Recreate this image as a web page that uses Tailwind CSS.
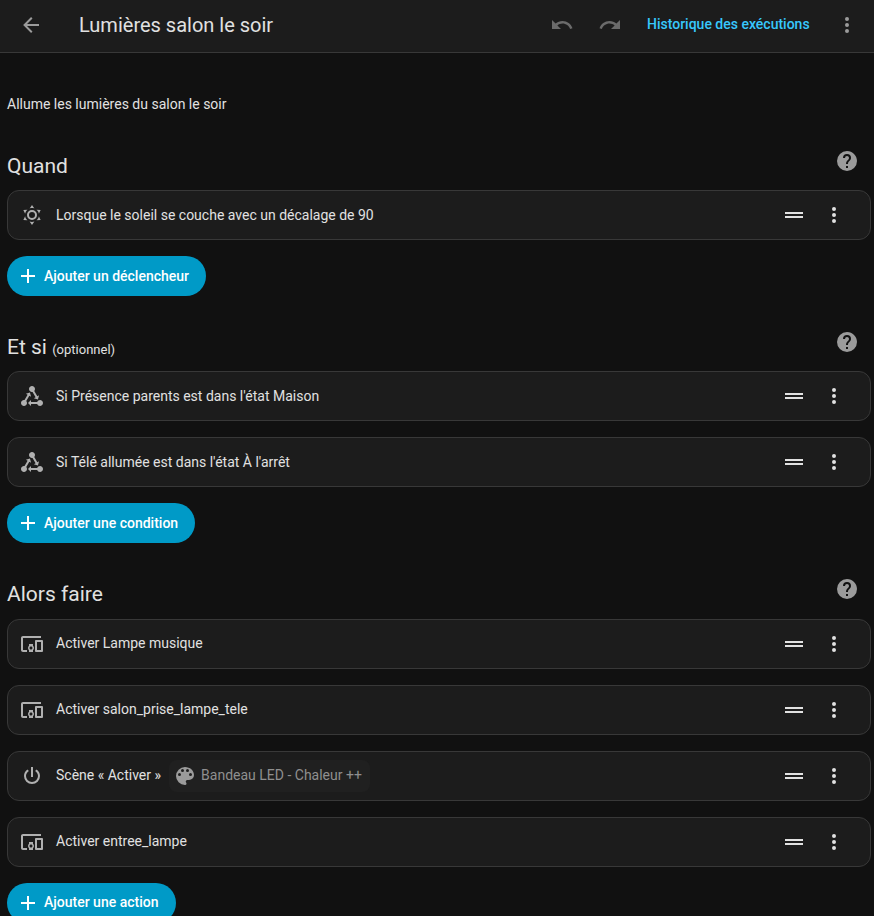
<!DOCTYPE html>
<html lang="fr">
<head>
<meta charset="utf-8">
<title>Lumières salon le soir</title>
<script src="https://cdn.jsdelivr.net/npm/@tailwindcss/browser@4"></script>
</head>
<body class="h-[916px] w-[874px] overflow-hidden bg-[#111111] font-['Roboto','Noto_Sans',sans-serif] text-sm text-[#e1e1e1] antialiased">
<svg class="hidden">
  <symbol id="back" viewBox="0 0 24 24"><path d="M20,11V13H8L13.5,18.5L12.08,19.92L4.16,12L12.08,4.08L13.5,5.5L8,11H20Z"/></symbol>
  <symbol id="undo" viewBox="0 0 24 24"><path d="M12.5,8C9.85,8 7.45,9 5.6,10.6L2,7V16H11L7.38,12.38C8.77,11.22 10.54,10.5 12.5,10.5C16.04,10.5 19.05,12.81 20.1,16L22.47,15.22C21.08,11.03 17.15,8 12.5,8Z"/></symbol>
  <symbol id="redo" viewBox="0 0 24 24"><path d="M18.4,10.6C16.55,9 14.15,8 11.5,8C6.85,8 2.92,11.03 1.54,15.22L3.9,16C4.95,12.81 7.95,10.5 11.5,10.5C13.45,10.5 15.23,11.22 16.62,12.38L13,16H22V7L18.4,10.6Z"/></symbol>
  <symbol id="dots" viewBox="0 0 24 24"><path d="M12,16A2,2 0 0,1 14,18A2,2 0 0,1 12,20A2,2 0 0,1 10,18A2,2 0 0,1 12,16M12,10A2,2 0 0,1 14,12A2,2 0 0,1 12,14A2,2 0 0,1 10,12A2,2 0 0,1 12,10M12,4A2,2 0 0,1 14,6A2,2 0 0,1 12,8A2,2 0 0,1 10,6A2,2 0 0,1 12,4Z"/></symbol>
  <symbol id="help" viewBox="0 0 24 24"><path d="M15.07,11.25L14.17,12.17C13.45,12.89 13,13.5 13,15H11V14.5C11,13.39 11.45,12.39 12.17,11.67L13.41,10.41C13.78,10.05 14,9.55 14,9C14,7.89 13.1,7 12,7A2,2 0 0,0 10,9H8A4,4 0 0,1 12,5A4,4 0 0,1 16,9C16,9.88 15.64,10.67 15.07,11.25M13,19H11V17H13M12,2A10,10 0 0,0 2,12A10,10 0 0,0 12,22A10,10 0 0,0 22,12C22,6.47 17.5,2 12,2Z"/></symbol>
  <symbol id="plus" viewBox="0 0 24 24"><path d="M19,13H13V19H11V13H5V11H11V5H13V11H19V13Z"/></symbol>
  <symbol id="drag" viewBox="0 0 24 24"><path d="M21 11H3V9H21V11M21 13H3V15H21V13Z"/></symbol>
  <symbol id="power" viewBox="0 0 24 24"><path d="M16.56,5.44L15.11,6.89C16.84,7.94 18,9.83 18,12A6,6 0 0,1 12,18A6,6 0 0,1 6,12C6,9.83 7.16,7.94 8.88,6.88L7.44,5.44C5.36,6.88 4,9.28 4,12A8,8 0 0,0 12,20A8,8 0 0,0 20,12C20,9.28 18.64,6.88 16.56,5.44M13,3H11V13H13"/></symbol>
  <symbol id="palette" viewBox="0 0 24 24"><path d="M17.5,12A1.5,1.5 0 0,1 16,10.5A1.5,1.5 0 0,1 17.5,9A1.5,1.5 0 0,1 19,10.5A1.5,1.5 0 0,1 17.5,12M14.5,8A1.5,1.5 0 0,1 13,6.5A1.5,1.5 0 0,1 14.5,5A1.5,1.5 0 0,1 16,6.5A1.5,1.5 0 0,1 14.5,8M9.5,8A1.5,1.5 0 0,1 8,6.5A1.5,1.5 0 0,1 9.5,5A1.5,1.5 0 0,1 11,6.5A1.5,1.5 0 0,1 9.5,8M6.5,12A1.5,1.5 0 0,1 5,10.5A1.5,1.5 0 0,1 6.5,9A1.5,1.5 0 0,1 8,10.5A1.5,1.5 0 0,1 6.5,12M12,3A9,9 0 0,0 3,12A9,9 0 0,0 12,21A1.5,1.5 0 0,0 13.5,19.5C13.5,19.11 13.35,18.76 13.11,18.5C12.88,18.23 12.73,17.88 12.73,17.5A1.5,1.5 0 0,1 14.23,16H16A5,5 0 0,0 21,11C21,6.58 16.97,3 12,3Z"/></symbol>
  <symbol id="devices" viewBox="0 0 24 24"><path d="M3 6H21V4H3C1.9 4 1 4.9 1 6V18C1 19.1 1.9 20 3 20H7V18H3V6M13 12H9V13.78C8.39 14.33 8 15.11 8 16C8 16.89 8.39 17.67 9 18.22V20H13V18.22C13.61 17.67 14 16.88 14 16S13.61 14.33 13 13.78V12M11 17.5C10.17 17.5 9.5 16.83 9.5 16S10.17 14.5 11 14.5 12.5 15.17 12.5 16 11.83 17.5 11 17.5M22 8H16C15.5 8 15 8.5 15 9V19C15 19.5 15.5 20 16 20H22C22.5 20 23 19.5 23 19V9C23 8.5 22.5 8 22 8M21 18H17V10H21V18Z"/></symbol>
  <symbol id="sun" viewBox="0 0 24 24"><path d="M12,7A5,5 0 0,1 17,12A5,5 0 0,1 12,17A5,5 0 0,1 7,12A5,5 0 0,1 12,7M12,9A3,3 0 0,0 9,12A3,3 0 0,0 12,15A3,3 0 0,0 15,12A3,3 0 0,0 12,9M12,2L14.39,5.42C13.65,5.15 12.84,5 12,5C11.16,5 10.35,5.15 9.61,5.42L12,2M3.34,7L7.5,6.65C6.9,7.16 6.36,7.78 5.94,8.5C5.5,9.24 5.25,10 5.11,10.79L3.34,7M3.36,17L5.12,13.23C5.26,14 5.53,14.78 5.95,15.5C6.37,16.24 6.91,16.86 7.5,17.37L3.36,17M20.65,7L18.88,10.79C18.74,10 18.47,9.23 18.05,8.5C17.63,7.78 17.1,7.15 16.5,6.64L20.65,7M20.64,17L16.5,17.36C17.09,16.85 17.62,16.22 18.04,15.5C18.46,14.77 18.73,14 18.87,13.21L20.64,17M12,22L9.59,18.56C10.33,18.83 11.14,19 12,19C12.82,19 13.63,18.83 14.37,18.56L12,22Z"/></symbol>
  <symbol id="state" viewBox="0 0 24 24"><path d="M6.27 17.05C6.72 17.58 7 18.25 7 19C7 20.66 5.66 22 4 22S1 20.66 1 19 2.34 16 4 16C4.18 16 4.36 16 4.53 16.05L7.6 10.69L5.86 9.7L9.95 8.58L11.07 12.67L9.33 11.68L6.27 17.05M20 16C18.7 16 17.6 16.84 17.18 18H11V16L8 19L11 22V20H17.18C17.6 21.16 18.7 22 20 22C21.66 22 23 20.66 23 19S21.66 16 20 16M12 8C12.18 8 12.36 8 12.53 7.95L15.6 13.31L13.86 14.3L17.95 15.42L19.07 11.33L17.33 12.32L14.27 6.95C14.72 6.42 15 5.75 15 5C15 3.34 13.66 2 12 2S9 3.34 9 5 10.34 8 12 8Z"/></symbol>
</svg>

<header class="flex h-[53px] items-center border-b border-[#383838] bg-[#1c1c1c] pt-px pr-[15px] pb-[3px] pl-[19px]">
  <svg class="size-6 fill-[#9b9b9b]"><use href="#back"/></svg>
  <h1 class="ml-9 flex-1 text-xl leading-6">Lumières salon le soir</h1>
  <svg class="mr-6 size-6 fill-[#6b6b6b]"><use href="#undo"/></svg>
  <svg class="size-6 fill-[#6b6b6b]"><use href="#redo"/></svg>
  <span class="ml-[25px] w-[163px] pb-0.5 text-sm font-medium whitespace-nowrap text-[#37c8fd]">Historique des exécutions</span>
  <svg class="ml-[25px] size-6 fill-[#9b9b9b]"><use href="#dots"/></svg>
</header>

<main class="pr-[3px] pl-[7px]">
  <p class="pt-[41px] leading-5">Allume les lumières du salon le soir</p>

  <section class="pt-[35px]">
    <div class="flex h-[41px] justify-between pr-3">
      <h2 class="pt-[5px] text-[21px] leading-6">Quand</h2>
      <svg class="size-6 fill-[#9b9b9b]"><use href="#help"/></svg>
    </div>
    <div class="flex flex-col items-start gap-4">
      <div class="flex h-[50px] w-full items-center rounded-xl border border-[#383838] bg-[#1c1c1c] pr-6 pl-3">
        <svg class="size-6 fill-[#b0b0b0]"><use href="#sun"/></svg>
        <span class="ml-3 flex-1">Lorsque le soleil se couche avec un décalage de 90</span>
        <svg class="mr-4 size-6 fill-current"><use href="#drag"/></svg>
        <svg class="size-6 fill-current"><use href="#dots"/></svg>
      </div>
      <button class="flex h-10 items-center gap-1 rounded-full bg-[#009ac7] pr-[17px] pl-[9px] font-medium text-white"><svg class="size-6 fill-current"><use href="#plus"/></svg><span>Ajouter un déclencheur</span></button>
    </div>
  </section>

  <section class="pt-[34px]">
    <div class="flex h-[41px] justify-between pr-3">
      <h2 class="pt-[5px] text-[21px] leading-6">Et si <span class="text-[13px]">(optionnel)</span></h2>
      <svg class="size-6 fill-[#9b9b9b]"><use href="#help"/></svg>
    </div>
    <div class="flex flex-col items-start gap-4">
      <div class="flex h-[50px] w-full items-center rounded-xl border border-[#383838] bg-[#1c1c1c] pr-6 pl-3">
        <svg class="size-6 fill-[#b0b0b0]"><use href="#state"/></svg>
        <span class="ml-3 flex-1">Si Présence parents est dans l'état Maison</span>
        <svg class="mr-4 size-6 fill-current"><use href="#drag"/></svg>
        <svg class="size-6 fill-current"><use href="#dots"/></svg>
      </div>
      <div class="flex h-[50px] w-full items-center rounded-xl border border-[#383838] bg-[#1c1c1c] pr-6 pl-3">
        <svg class="size-6 fill-[#b0b0b0]"><use href="#state"/></svg>
        <span class="ml-3 flex-1">Si Télé allumée est dans l'état À l'arrêt</span>
        <svg class="mr-4 size-6 fill-current"><use href="#drag"/></svg>
        <svg class="size-6 fill-current"><use href="#dots"/></svg>
      </div>
      <button class="flex h-10 items-center gap-1 rounded-full bg-[#009ac7] pr-[17px] pl-[9px] font-medium text-white"><svg class="size-6 fill-current"><use href="#plus"/></svg><span>Ajouter une condition</span></button>
    </div>
  </section>

  <section class="pt-[34px]">
    <div class="flex h-[42px] justify-between pr-3">
      <h2 class="pt-[5px] text-[21px] leading-6">Alors faire</h2>
      <svg class="size-6 fill-[#9b9b9b]"><use href="#help"/></svg>
    </div>
    <div class="flex flex-col items-start gap-4">
      <div class="flex h-[50px] w-full items-center rounded-xl border border-[#383838] bg-[#1c1c1c] pr-6 pl-3">
        <svg class="size-6 fill-[#b0b0b0]"><use href="#devices"/></svg>
        <span class="ml-3 flex-1 pb-0.5">Activer Lampe musique</span>
        <svg class="mr-4 size-6 fill-current"><use href="#drag"/></svg>
        <svg class="size-6 fill-current"><use href="#dots"/></svg>
      </div>
      <div class="flex h-[50px] w-full items-center rounded-xl border border-[#383838] bg-[#1c1c1c] pr-6 pl-3">
        <svg class="size-6 fill-[#b0b0b0]"><use href="#devices"/></svg>
        <span class="ml-3 flex-1 pb-0.5">Activer salon_prise_lampe_tele</span>
        <svg class="mr-4 size-6 fill-current"><use href="#drag"/></svg>
        <svg class="size-6 fill-current"><use href="#dots"/></svg>
      </div>
      <div class="flex h-[50px] w-full items-center rounded-xl border border-[#383838] bg-[#1c1c1c] pr-6 pl-3">
        <svg class="size-6 fill-[#b0b0b0]"><use href="#power"/></svg>
        <span class="ml-3 pb-0.5">Scène « Activer »</span>
        <div class="ml-2 flex h-8 items-center rounded-lg bg-[#202020] pr-2 pl-1 text-[#8f8f8f]">
          <svg class="size-6 fill-[#9b9b9b]"><use href="#palette"/></svg>
          <span class="ml-1 pb-0.5">Bandeau LED - Chaleur ++</span>
        </div>
        <span class="flex-1"></span>
        <svg class="mr-4 size-6 fill-current"><use href="#drag"/></svg>
        <svg class="size-6 fill-current"><use href="#dots"/></svg>
      </div>
      <div class="flex h-[50px] w-full items-center rounded-xl border border-[#383838] bg-[#1c1c1c] pr-6 pl-3">
        <svg class="size-6 fill-[#b0b0b0]"><use href="#devices"/></svg>
        <span class="ml-3 flex-1 pb-0.5">Activer entree_lampe</span>
        <svg class="mr-4 size-6 fill-current"><use href="#drag"/></svg>
        <svg class="size-6 fill-current"><use href="#dots"/></svg>
      </div>
      <button class="flex h-10 items-center gap-1 rounded-full bg-[#009ac7] pr-[17px] pl-[9px] font-medium text-white"><svg class="size-6 fill-current"><use href="#plus"/></svg><span class="pb-0.5">Ajouter une action</span></button>
    </div>
  </section>
</main>
</body>
</html>
